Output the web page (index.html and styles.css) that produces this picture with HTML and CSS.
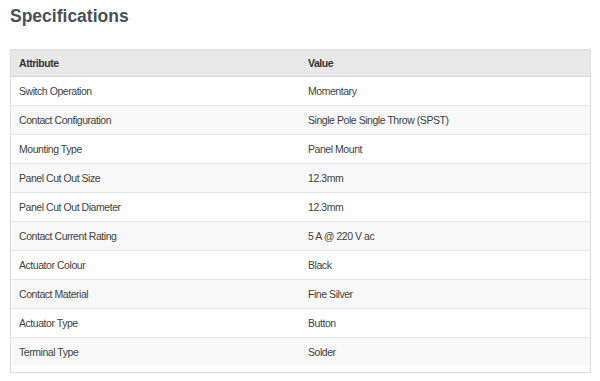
FILE: index.html
```html
<!DOCTYPE html>
<html>
<head>
<meta charset="utf-8">
<link rel="stylesheet" href="styles.css">
</head>
<body>
<h2 class="title">Specifications</h2>
<div class="panel">
  <table class="specs">
    <thead>
      <tr><th class="attr">Attribute</th><th>Value</th></tr>
    </thead>
    <tbody>
      <tr><td class="attr">Switch Operation</td><td>Momentary</td></tr>
      <tr><td class="attr">Contact Configuration</td><td>Single Pole Single Throw (SPST)</td></tr>
      <tr><td class="attr">Mounting Type</td><td>Panel Mount</td></tr>
      <tr><td class="attr">Panel Cut Out Size</td><td>12.3mm</td></tr>
      <tr><td class="attr">Panel Cut Out Diameter</td><td>12.3mm</td></tr>
      <tr><td class="attr">Contact Current Rating</td><td>5 A @ 220 V ac</td></tr>
      <tr><td class="attr">Actuator Colour</td><td>Black</td></tr>
      <tr><td class="attr">Contact Material</td><td>Fine Silver</td></tr>
      <tr><td class="attr">Actuator Type</td><td>Button</td></tr>
      <tr><td class="attr">Terminal Type</td><td>Solder</td></tr>
    </tbody>
  </table>
</div>
</body>
</html>
```
FILE: styles.css
```css
html, body {
  margin: 0;
  padding: 0;
  background: #ffffff;
}
body {
  padding: 0 10px 0 10px;
  font-family: "Liberation Sans", Arial, sans-serif;
}
.title {
  margin: 0;
  padding-top: 5px;
  height: 49px;
  box-sizing: border-box;
  font-family: "Liberation Sans", Arial, sans-serif;
  font-weight: bold;
  font-size: 17.5px;
  line-height: 22px;
  color: #4a4f59;
}
.panel {
  border: 1px solid #dcdcdc;
  padding-bottom: 6px;
  width: 581px;
  box-sizing: border-box;
}
.specs {
  width: 100%;
  border-collapse: collapse;
  font-size: 10.5px;
  letter-spacing: -0.45px;
  color: #3f3f3f;
}
.specs th {
  height: 26px;
  background: #e8e8e8;
  text-align: left;
  font-weight: bold;
  padding: 0 8px;
  border-bottom: 1px solid #d6d6d6;
  color: #333;
}
.specs td {
  height: 28px;
  padding: 0 8px;
  border-bottom: 1px solid #e4e4e4;
}
.specs tbody tr:nth-child(even) td {
  background: #f8f8f8;
}
.specs tbody tr:last-child td {
  border-bottom: none;
}
.specs .attr {
  width: 273px;
}
```
